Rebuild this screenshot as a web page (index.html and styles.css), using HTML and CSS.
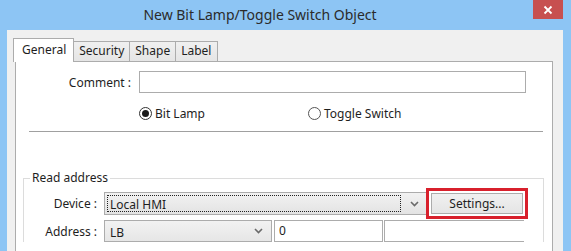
FILE: index.html
```html
<!DOCTYPE html>
<html>
<head>
<meta charset="utf-8">
<link rel="stylesheet" href="styles.css">
</head>
<body>
<div class="window">
  <div class="titlebar">
    <div class="title">New Bit Lamp/Toggle Switch Object</div>
    <div class="close">
      <svg width="10" height="10" viewBox="0 0 10 10"><path d="M1.5 1.5 L8.5 8.5 M8.5 1.5 L1.5 8.5" stroke="#fff" stroke-width="1.8" fill="none"/></svg>
    </div>
  </div>
  <div class="client">
    <div class="tabs">
      <div class="tab active">General</div>
      <div class="tab">Security</div>
      <div class="tab">Shape</div>
      <div class="tab">Label</div>
    </div>
    <div class="panel">
      <div class="row comment-row">
        <span class="lbl lbl-wide">Comment :</span>
        <div class="textbox comment-box"></div>
      </div>
      <div class="radio-row">
        <span class="radio checked"><span class="dot"></span></span><span class="rtext">Bit Lamp</span>
        <span class="radio second"></span><span class="rtext">Toggle Switch</span>
      </div>
      <div class="separator"></div>
      <fieldset class="group">
        <legend>Read address</legend>
        <div class="row device-row">
          <span class="lbl">Device :</span>
          <div class="combo device-combo">
            <span class="combo-text focus">Local HMI</span>
            <svg class="chev" width="9" height="6" viewBox="0 0 9 6"><path d="M1 1 L4.5 4.5 L8 1" stroke="#6a6a6a" stroke-width="1.6" fill="none"/></svg>
          </div>
          <button class="btn">Settings...</button>
        </div>
        <div class="row address-row">
          <span class="lbl">Address :</span>
          <div class="combo addr-combo">
            <span class="combo-text">LB</span>
            <svg class="chev" width="9" height="6" viewBox="0 0 9 6"><path d="M1 1 L4.5 4.5 L8 1" stroke="#6a6a6a" stroke-width="1.6" fill="none"/></svg>
          </div>
          <div class="textbox addr-box">0</div>
          <div class="textbox addr-box2"></div>
        </div>
      </fieldset>
    </div>
  </div>
</div>
</body>
</html>
```
FILE: styles.css
```css
* { box-sizing: border-box; }
html, body { margin: 0; padding: 0; }
body {
  background: #8dc5f4;
  font-family: "Noto Sans", "Open Sans", sans-serif;
  font-size: 12px;
  color: #1e1e1e;
}
.window {
  width: 571px;
  height: 251px;
  overflow: hidden;
  display: flex;
  flex-direction: column;
}
.titlebar {
  height: 30px;
  flex: none;
  display: flex;
  align-items: flex-start;
}
.title {
  flex: 1;
  text-align: center;
  margin-right: 13px;
  padding-top: 4px;
  font-size: 14px;
  line-height: 22px;
  color: #2b2b2b;
}
.close {
  width: 30px;
  height: 19px;
  margin-right: 8px;
  background: #c75050;
  display: flex;
  align-items: center;
  justify-content: center;
}
.client {
  flex: 1;
  margin: 0 8px 0 7px;
  background: #f0f0f0;
  padding-top: 8px;
  display: flex;
  flex-direction: column;
}
.tabs {
  display: flex;
  align-items: flex-end;
  margin-left: 8px;
  height: 23px;
}
.tab {
  height: 20px;
  padding: 0 5px;
  border: 1px solid #acacac;
  border-bottom: none;
  background: linear-gradient(#f0f0f0, #e5e5e5);
  margin-left: -1px;
  line-height: 18px;
  font-size: 12px;
}
.tab.active {
  height: 24px;
  margin-left: -2px;
  margin-right: -1px;
  margin-bottom: -1px;
  padding: 0 7px 0 8px;
  background: #fff;
  position: relative;
  z-index: 1;
  line-height: 21px;
}
.tab.active + .tab { margin-left: 0; }
.tab:last-child { padding: 0 6px 0 5px; }
.panel {
  flex: 1;
  margin: 0 10px 0 8px;
  background: #fff;
  border: 1px solid #acacac;
  border-bottom: none;
  padding-top: 9px;
}
.row {
  display: flex;
  align-items: center;
}
.lbl {
  text-align: right;
  white-space: nowrap;
}
.lbl-wide {
  width: 115px;
  margin-right: 8px;
}
.textbox {
  height: 22px;
  background: #fff;
  border: 1px solid #acacac;
  padding: 0 4px;
  line-height: 20px;
}
.comment-box { width: 387px; }
.radio-row {
  display: flex;
  align-items: center;
  height: 16px;
  margin-top: 12px;
  padding-left: 123px;
}
.radio {
  width: 13px;
  height: 13px;
  border: 1px solid #333;
  border-radius: 50%;
  display: flex;
  align-items: center;
  justify-content: center;
  background: #fff;
}
.radio .dot {
  width: 7px;
  height: 7px;
  border-radius: 50%;
  background: #1a1a1a;
}
.radio.second { margin-left: 103px; border-color: #555; }
.rtext { margin-left: 3px; }
.separator {
  height: 1px;
  background: #a0a0a0;
  margin: 10px 9px 0 13px;
}
.group {
  margin: 38px 8px 0 7px;
  border: 1px solid #dcdcdc;
  border-bottom: none;
  padding: 6px 0 0 0;
  min-width: 0;
}
.group legend {
  padding: 0 2px;
  margin-left: 6px;
  line-height: 16px;
}
.group .lbl {
  width: 73px;
  margin-right: 7px;
}
.device-row { height: 23px; }
.combo {
  height: 23px;
  border: 1px solid #acacac;
  background: linear-gradient(#f2f2f2, #e3e3e3);
  display: flex;
  align-items: center;
  padding: 2px;
}
.device-combo { width: 324px; }
.addr-combo { width: 168px; height: 22px; background: linear-gradient(#f2f2f2, #e6e6e6); }
.combo-text {
  flex: 1;
  height: 100%;
  line-height: 17px;
  padding-left: 2px;
  border: 1px solid transparent;
}
.combo-text.focus {
  border: 1px dotted #222;
}
.chev { margin: 0 6px 0 9px; flex: none; }
.btn {
  margin-left: 3px;
  width: 92px;
  height: 21px;
  border: 1px solid #acacac;
  background: linear-gradient(#f0f0f0, #e5e5e5);
  font: inherit;
  color: #1e1e1e;
  padding: 0;
  outline: 3px solid #d8202c;
  outline-offset: 2px;
}
.address-row {
  margin-top: 5px;
  height: 22px;
}
.addr-box { width: 109px; margin-left: 2px; }
.addr-box2 { width: 140px; margin-left: 1px; border-right: none; }
```
